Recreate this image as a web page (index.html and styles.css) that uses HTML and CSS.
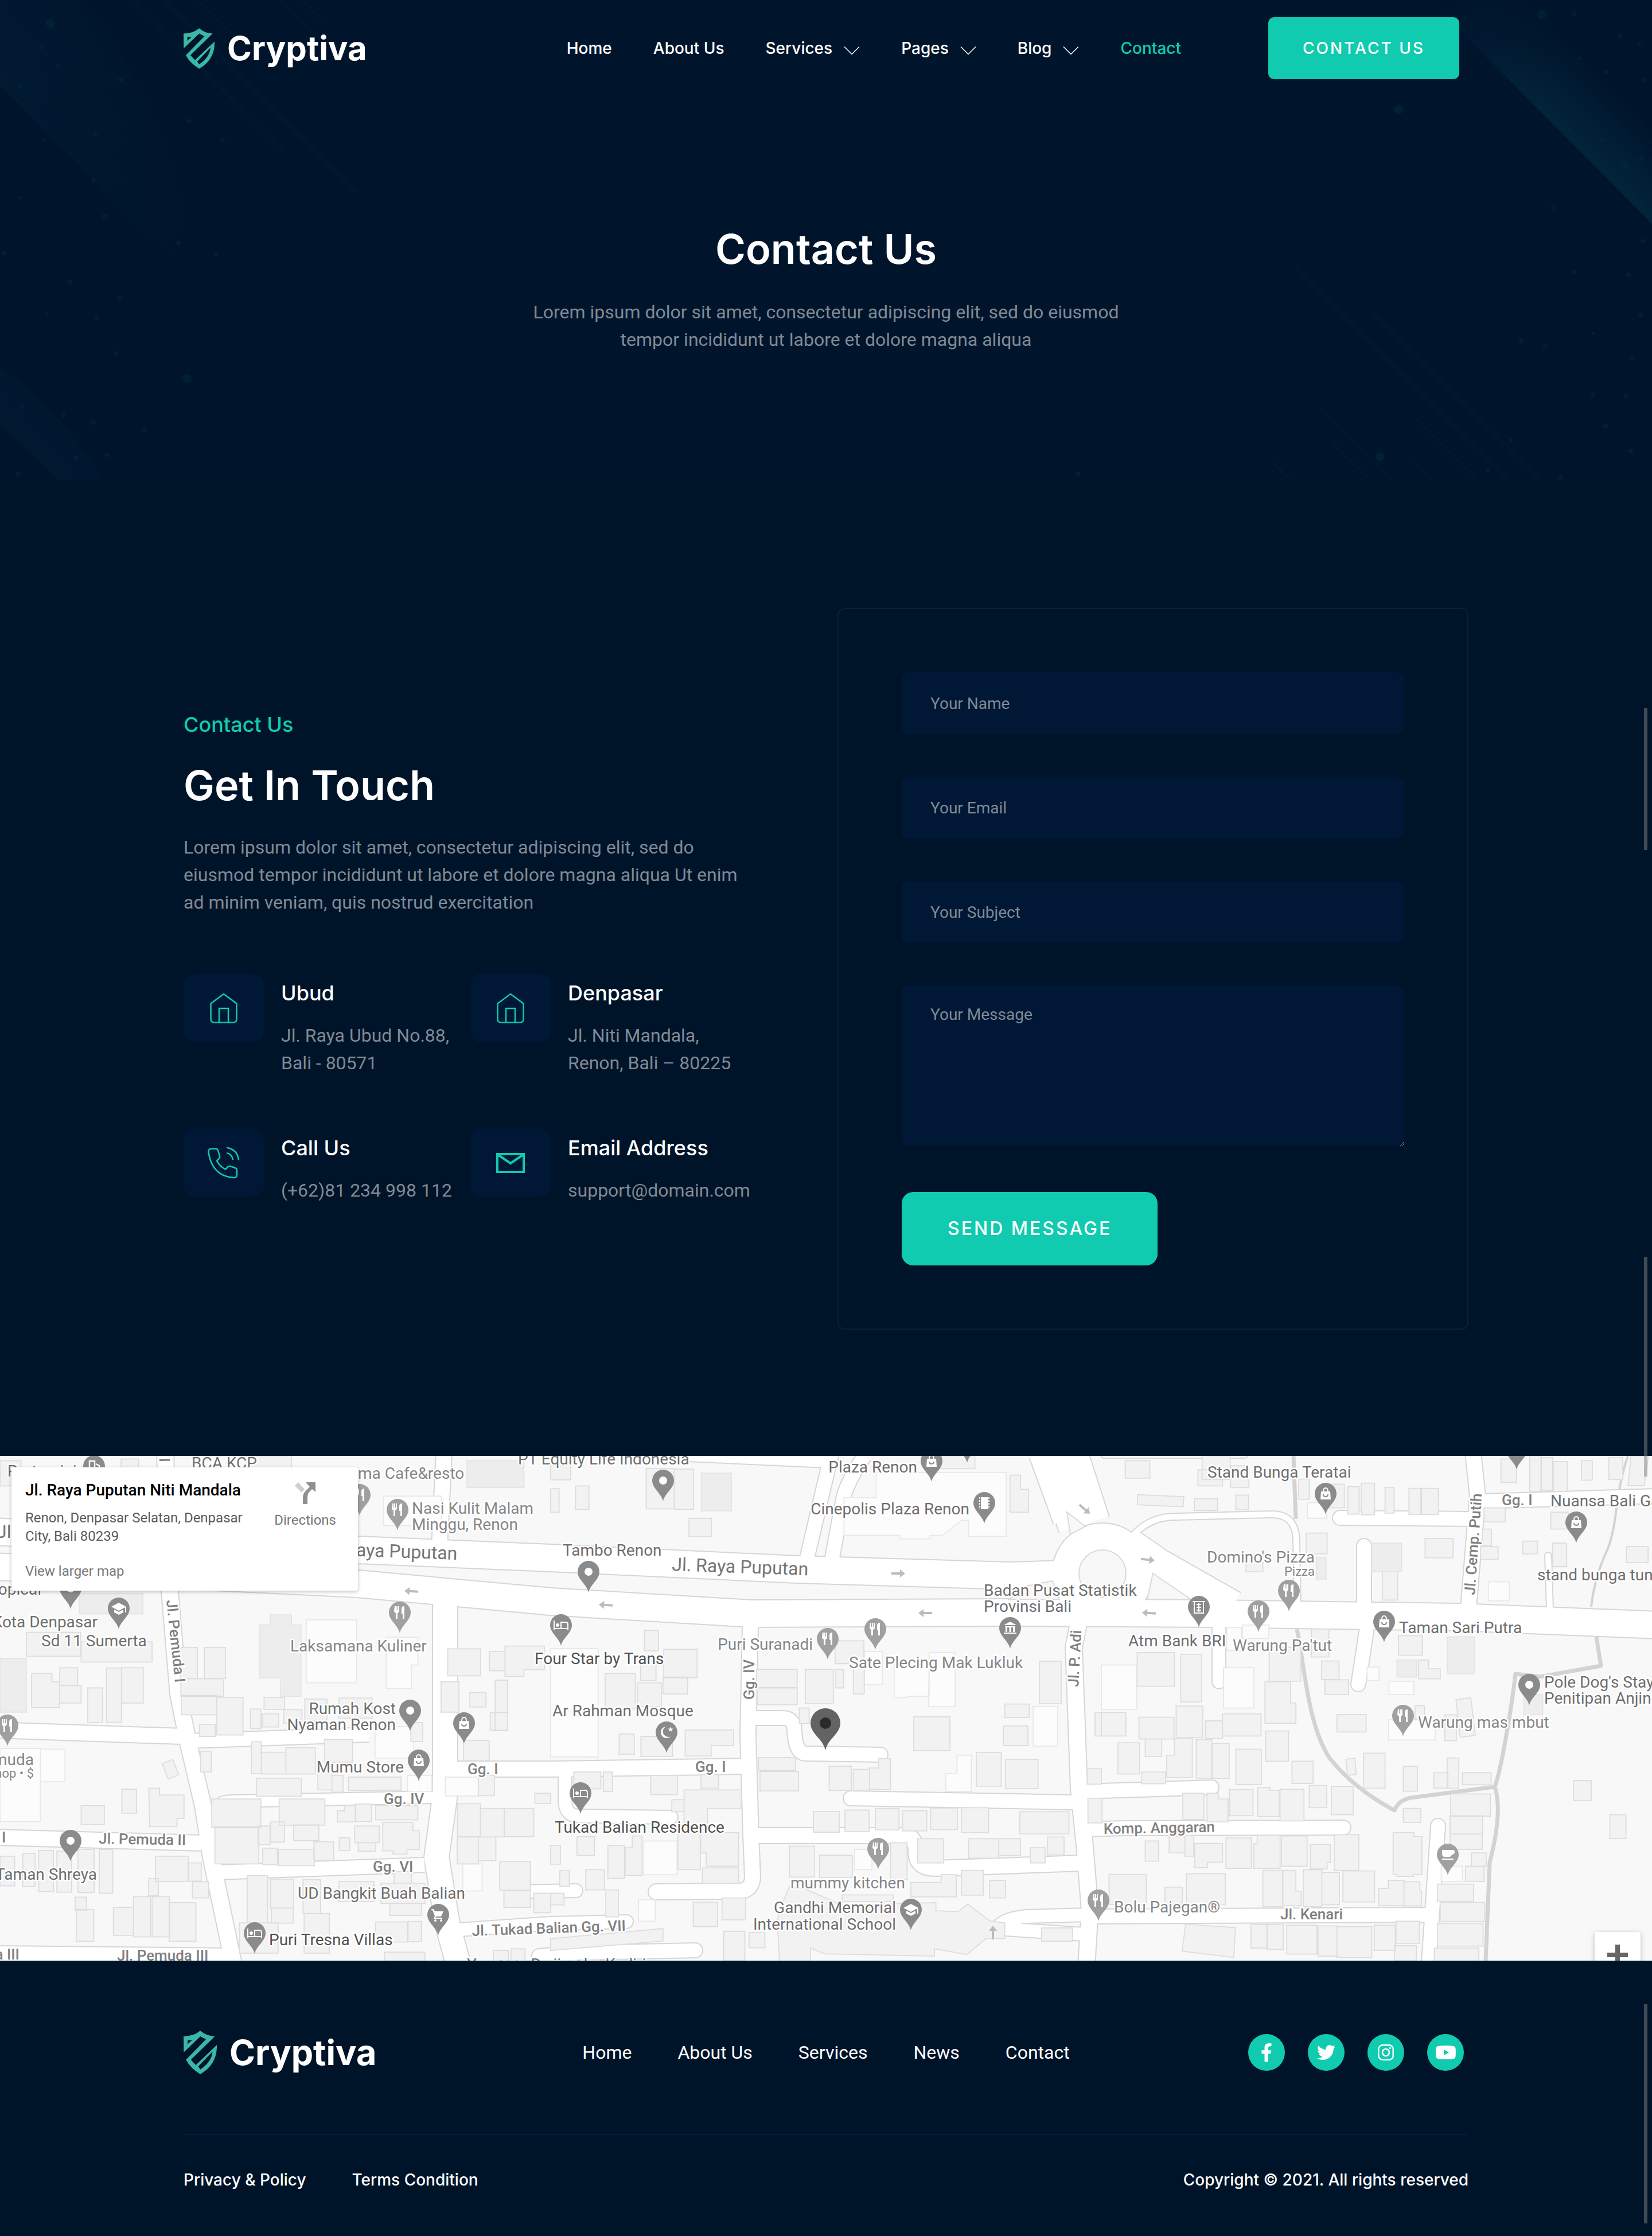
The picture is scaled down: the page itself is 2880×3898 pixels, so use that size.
FILE: index.html
```html
<!DOCTYPE html>
<html lang="en">
<head>
<meta charset="utf-8">
<meta name="viewport" content="width=device-width, initial-scale=1">
<title>Contact Us | Cryptiva</title>
<link rel="stylesheet" href="styles.css">
</head>
<body>
<svg class="sprite" aria-hidden="true">
  <symbol id="shield" viewBox="30 80 163 213">
    <path fill-rule="evenodd" d="M30 108Q85 106 112 80Q140 106 183 108L66 222L90 248L193 150Q196 245 112 293Q62 262 42 222L140 122L112 108L31 186zM50 126h22L50 146zM172 182L102 255L112 270Q168 232 172 182z"/>
  </symbol>
  <symbol id="chevron" viewBox="0 0 28 16"><path d="M1 1.500L14 14.500L27 1.500" fill="none" stroke="currentColor" stroke-width="1.500"/></symbol>
  <symbol id="home" viewBox="0 0 48 53">
    <path d="M1.500 18.500L24 1.800L46.500 18.500V46a5.500 5.500 0 0 1-5.500 5.500H7a5.500 5.500 0 0 1-5.500-5.500zM16 51V27h16v24" fill="none" stroke="currentColor" stroke-width="2.500"/>
  </symbol>
</svg>

<header class="hero">
  <svg class="hero-art" viewBox="0 0 2880 836" preserveAspectRatio="xMidYMid slice" aria-hidden="true">
    <defs>
      <linearGradient id="beamL" x1="0" y1="1" x2="1" y2="0"><stop offset=".25" stop-color="#03243a"/><stop offset=".75" stop-color="#001730"/><stop offset="1" stop-color="#00152c"/></linearGradient>
      <linearGradient id="fadeL" gradientUnits="userSpaceOnUse" x1="60" y1="100" x2="330" y2="440"><stop offset="0" stop-color="#00152c" stop-opacity="0"/><stop offset="1" stop-color="#00152c"/></linearGradient>
      <linearGradient id="beamR" gradientUnits="userSpaceOnUse" x1="2690" y1="190" x2="2770" y2="110"><stop offset="0" stop-color="#022339"/><stop offset="1" stop-color="#00152c"/></linearGradient>
      <linearGradient id="fadeR" gradientUnits="userSpaceOnUse" x1="2540" y1="0" x2="2700" y2="160"><stop offset="0" stop-color="#00152c"/><stop offset="1" stop-color="#00152c" stop-opacity="0"/></linearGradient>
    </defs>
    <path d="M0 0H150Q320 230 330 480L0 150z" fill="url(#beamL)" opacity=".45"/>
    <path d="M0 0H150Q320 230 330 480L0 150z" fill="url(#fadeL)"/>
    <path d="M0 640Q110 720 180 836H100L0 738z" fill="url(#beamL)" opacity=".35"/>
    <path d="M2500 0H2880V390L2560 68z" fill="url(#beamR)"/>
    <path d="M2500 0H2880V390L2560 68z" fill="url(#fadeR)"/>
    <g class="hero-lines">
      <path d="M232 0L496 264M287 0L624 337M345 0L420 75M490 0L545 55M527 0L562 35"/>
      <path d="M2260 468L2628 836M2389 541L2684 836M2299 711L2424 836M2322 771L2387 836M2469 729L2576 836M2459 797L2498 836M2219 806L2249 836"/>
    </g>
    <g class="hero-dots">
      <circle cx="88" cy="41" r="8"/><circle cx="72" cy="82" r="4"/><circle cx="210" cy="139" r="4"/><circle cx="101" cy="113" r="3"/><circle cx="34" cy="151" r="4"/><circle cx="329" cy="211" r="4"/><circle cx="388" cy="244" r="4"/><circle cx="166" cy="234" r="4"/><circle cx="76" cy="243" r="3"/><circle cx="163" cy="314" r="4"/><circle cx="36" cy="344" r="3"/><circle cx="183" cy="377" r="5"/><circle cx="311" cy="423" r="4"/><circle cx="377" cy="444" r="4"/><circle cx="7" cy="441" r="4"/><circle cx="122" cy="491" r="4"/><circle cx="208" cy="520" r="4"/><circle cx="82" cy="546" r="3"/><circle cx="169" cy="555" r="4"/><circle cx="202" cy="616" r="4"/><circle cx="326" cy="660" r="8"/><circle cx="38" cy="709" r="4"/><circle cx="110" cy="723" r="4"/><circle cx="163" cy="737" r="4"/><circle cx="252" cy="749" r="4"/><circle cx="186" cy="793" r="4"/><circle cx="133" cy="798" r="4"/><circle cx="32" cy="826" r="4"/>
      <circle cx="2688" cy="25" r="8"/><circle cx="2744" cy="24" r="4"/><circle cx="2824" cy="63" r="4"/><circle cx="2858" cy="77" r="3"/><circle cx="2754" cy="102" r="3"/><circle cx="2801" cy="126" r="4"/><circle cx="2867" cy="139" r="4"/><circle cx="2438" cy="191" r="8"/><circle cx="2735" cy="225" r="4"/><circle cx="2793" cy="243" r="4"/><circle cx="2861" cy="276" r="4"/><circle cx="2834" cy="288" r="7"/><circle cx="2708" cy="361" r="4"/><circle cx="2864" cy="420" r="4"/><circle cx="2745" cy="474" r="4"/><circle cx="2839" cy="479" r="4"/><circle cx="2860" cy="549" r="4"/><circle cx="2777" cy="581" r="3"/><circle cx="2652" cy="594" r="4"/><circle cx="2694" cy="603" r="4"/><circle cx="2844" cy="625" r="4"/><circle cx="2777" cy="688" r="4"/><circle cx="2835" cy="690" r="4"/><circle cx="2799" cy="743" r="4"/><circle cx="2634" cy="768" r="4"/><circle cx="2406" cy="796" r="8"/><circle cx="2843" cy="786" r="4"/><circle cx="2594" cy="820" r="4"/><circle cx="1880" cy="826" r="4"/><circle cx="2720" cy="832" r="4"/>
    </g>
  </svg>
  <div class="topbar container">
    <a class="brand" href="#"><svg class="brand-mark"><use href="#shield"/></svg><span>Cryptiva</span></a>
    <nav class="menu" aria-label="Main">
      <a href="#">Home</a>
      <a href="#">About Us</a>
      <a href="#">Services <svg class="chevron"><use href="#chevron"/></svg></a>
      <a href="#">Pages <svg class="chevron"><use href="#chevron"/></svg></a>
      <a href="#">Blog <svg class="chevron"><use href="#chevron"/></svg></a>
      <a class="active" href="#">Contact</a>
    </nav>
    <a class="btn btn-small" href="#contact">CONTACT US</a>
  </div>
  <div class="hero-text">
    <h1>Contact Us</h1>
    <p>Lorem ipsum dolor sit amet, consectetur adipiscing elit, sed do eiusmod tempor incididunt ut labore et dolore magna aliqua</p>
  </div>
</header>

<main>
  <section class="contact container" id="contact">
    <div class="intro">
      <p class="eyebrow">Contact Us</p>
      <h2>Get In Touch</h2>
      <p class="lead">Lorem ipsum dolor sit amet, consectetur adipiscing elit, sed do eiusmod tempor incididunt ut labore et dolore magna aliqua Ut enim ad minim veniam, quis nostrud exercitation</p>
      <div class="places">
        <div class="place">
          <div class="tile"><svg width="48" height="53"><use href="#home"/></svg></div>
          <div class="place-text"><h3>Ubud</h3><p>Jl. Raya Ubud No.88,<br>Bali - 80571</p></div>
        </div>
        <div class="place">
          <div class="tile"><svg width="48" height="53"><use href="#home"/></svg></div>
          <div class="place-text"><h3>Denpasar</h3><p>Jl. Niti Mandala,<br>Renon, Bali – 80225</p></div>
        </div>
        <div class="place">
          <div class="tile"><svg width="56" height="56" viewBox="0 0 56 56" fill="none" stroke="currentColor" stroke-width="2.500"><path d="M6 3.500h8q3 0 4 3l3 10q.5 2-1 4l-4 4q5 10 15 15l4-4q2-2 4-1.500l9 3q3 1 3 4v8q0 5.500-6 5Q8 51 1.500 10Q1 4 6 3.500zM33 1.500Q52 5 54 23M33 11Q43 13 44 23"/></svg></div>
          <div class="place-text"><h3>Call Us</h3><p>(+62)81 234 998 112</p></div>
        </div>
        <div class="place">
          <div class="tile"><svg width="50" height="35" viewBox="0 0 50 35" fill="none" stroke="currentColor" stroke-width="4"><path d="M2 2h46v31H2zM3 3L25 18L47 3"/></svg></div>
          <div class="place-text"><h3>Email Address</h3><p>support@domain.com</p></div>
        </div>
      </div>
    </div>
    <form class="card">
      <input type="text" aria-label="Your Name" placeholder="Your Name">
      <input type="email" aria-label="Your Email" placeholder="Your Email">
      <input type="text" aria-label="Your Subject" placeholder="Your Subject">
      <textarea aria-label="Your Message" placeholder="Your Message"></textarea>
      <button class="btn btn-large" type="button">SEND MESSAGE</button>
    </form>
  </section>

  <section class="map" aria-label="Map">
    <svg class="map-canvas" viewBox="0 0 2880 880" preserveAspectRatio="xMidYMid slice">
      <defs>
        <path id="pin" d="M0 0C-3-14-19-22-19-36A19 19 0 1 1 19-36C19-22 3-14 0 0z"/>
        <g id="p-dot"><use href="#pin"/><circle cy="-36" r="7" fill="#fff"/></g>
        <g id="p-food"><use href="#pin"/><path fill="#fff" d="M-9-47h2v7h1v-7h2v7h1v-7h2v8q0 3-3 4v10h-3v-10q-3-1-3-4zM3-42q0-5 5-5v22h-3v-9h-2z"/></g>
        <g id="p-bag"><use href="#pin"/><path fill="#fff" d="M-8-40h16l1 14h-18z"/><path fill="none" stroke="#fff" stroke-width="2" d="M-4-40q0-6 4-6t4 6"/><path fill="none" stroke="#8b8b8b" stroke-width="2" d="M-4-35q0 4 4 4t4-4"/></g>
        <g id="p-bed"><use href="#pin"/><path fill="none" stroke="#fff" stroke-width="2" d="M-12-44v17M-12-30h24M12-27v-10q0-4-4-4h-8v10"/><circle cx="-6" cy="-36" r="3" fill="#fff"/></g>
        <g id="p-school"><use href="#pin"/><path fill="#fff" d="M0-46L13-39L0-32L-13-39zM-8-34L0-30L8-34V-29L0-25L-8-29zM11-38h2v9h-2z"/></g>
        <g id="p-bank"><use href="#pin"/><path fill="#fff" d="M0-47L11-41H-11zM-9-39h18v2H-9zM-8-37h3v8h-3zM-1.500-37h3v8h-3zM5-37h3v8H5zM-11-28h22v2h-22z"/></g>
        <g id="p-film"><use href="#pin"/><path fill="#fff" d="M-6-46h12v21H-6z"/><path d="M-8-46v21M8-46v21" stroke="#fff" stroke-width="2" stroke-dasharray="3 2"/></g>
        <g id="p-moon"><use href="#pin"/><path fill="#fff" d="M-1-46a10 10 0 1 0 8 17a9 9 0 1 1-8-17zM7-46l1.500 3.500h3.500l-3 2l1 3.500l-3-2l-3 2l1-3.500l-3-2h3.500z"/></g>
        <g id="p-cart"><use href="#pin"/><path fill="#fff" d="M-12-46h4l2 4h15l-4 9h-9l-1 2h12v2h-15l2-5-4-10h-2z"/><circle cx="-5" cy="-26" r="2" fill="#fff"/><circle cx="5" cy="-26" r="2" fill="#fff"/></g>
        <g id="p-cup"><use href="#pin"/><path fill="#fff" d="M-10-44h19q3 0 3 4t-5 4q-1 4-5 4h-7q-5 0-5-6zM-10-29h20v2h-20z"/></g>
        <g id="p-atm"><use href="#pin"/><path fill="none" stroke="#fff" stroke-width="2" d="M-11-45h22M-8-44v19h16v-19M-4-40h8M-4-35h8M-4-30h8M0-42v15"/></g>
        <g id="p-gas"><use href="#pin"/><path fill="none" stroke="#fff" stroke-width="2.500" d="M-8-26v-19h9v19zM3-40l6 3v9"/></g>
        <path id="arrow" fill="#bcbcbc" d="M-12-2H3V-7L12 0L3 7V2H-12z"/>

        <g id="streets">
          <path class="w46" d="M-10 132L624 164L960 178L1390 198L1760 209L1880 205M-10 193L311 208L624 223L960 254L1310 275L1760 273L2116 275L2544 281L2890 295"/>
          <circle class="w46" cx="1922" cy="205" r="64"/>
          <path class="w52" d="M1820-5L1862 110M1965 150L2020 188L2150 262"/>
          <path class="w90" d="M1850-5L1890 120"/>
          <path class="w42" d="M776 255V590L761 700L780 816L800 890"/>
          <path class="w28" d="M288-5L296 236L311 416L328 500L354 610L368 700L408 890M1880 293L1872 334L1881 580L1891 680L1900 792L1894 890M1180-6L1440 6"/>
          <path class="w26" d="M774-5L766 160M-5 478L318 489M-5 665L352 675M-5 868L404 872M790 546L960 546L1300 541M2568-5L2576 70L2560 265"/>
          <path class="w24" d="M1406 182L1450-5M1450 182L1471 70Q1480 40 1507 0M330 497L643 486M380 726L740 713M2587 79L2890 70M1895 803L2488 800"/>
          <path class="w20" d="M385 606Q390 602 405 602L756 595"/>
          <g stroke-linecap="round">
            <path class="w26" d="M1308 298L1304 486L1309 662L1312 733Q1312 759 1285 759L1144 760M1322 662H1575Q1597 662 1597 690Q1597 719 1630 719L1885 710"/>
            <path class="w24" d="M1318 457H1364Q1385 457 1385 480Q1387 519 1405 519L1535 521M1483 597L1870 604M1893 651L1960 649L2342 648M1890 586L1920 584L2112 578M2507 645L2498 780L2490 895M2378 157V262M2383 300L2368 398M2336 108L2563 110M940 872L1010 866L1212 862"/>
            <path class="w22" d="M2125 298V394M985 545V600Q985 628 1010 628L1170 630M900 760L1004 758M800 826L960 815L1092 812M1895 800L1790 803Q1750 806 1737 824L1890 834"/>
            <path class="w10" d="M1977 137Q2005 106 2050 106L2214 102C2255 100 2260 130 2260 150L2262 258M2699 174L2702 267M1925-2H2170"/>
          </g>
        </g>
      </defs>

      <rect width="2880" height="880" fill="#f8f8f8"/>
      <g fill="none" stroke="#d3d3d3" stroke-linejoin="round">
        <path stroke-width="7" d="M2255 0L2259 110M2261 302C2275 370 2280 470 2318 527Q2360 580 2431 618Q2438 600 2460 596L2606 577M2783 316L2791 366L2685 385L2642 380Q2635 440 2624 498Q2615 550 2606 577Q2620 620 2597 709L2590 880"/>
        <path stroke-width="4" d="M2838 0Q2824 40 2817 99Q2812 140 2802 164Q2780 210 2774 263"/>
      </g>
      <g class="casing"><use href="#streets"/></g>
      <g class="roadway"><use href="#streets"/></g>
      <g fill="#f8f8f8" stroke="#dadada" stroke-width="2">
        <circle cx="1922" cy="205" r="41"/>
        <path d="M2010 205L2000 250H2076zM1860 98L1892 123L1866 137zM1759 250L1790 227L1835 218L1846 250z"/>
      </g>

      <g class="buildings" transform="translate(0 -18) scale(.6122 .5868)">
        <path class="pale" d="M872 518h143v187H872zM1100 570h90v82h-18v70H1100zM1092 150h165v88H1092zM1068 835h110v93H1068zM0 900h115v217H0zM1318 1243h55v80H1318zM1268 985h95v56H1268zM1160 980h70v48H1160zM115 902h70v97H115z"/>
        <path class="dark" d="M226 440h181v60H226zM740 533h30v-30h60v30h27v212h-58v-54h-59zM1330 45h162v80H1330zM0 632h75v160H0z"/>
        <path d="M75 555h155v71H75zM231 583h202v60H231zM90 677h58v25h22v76H90zM170 660h51v53H170zM170 713h61v52H170zM250 720h42v103H250zM303 661h43v161H303zM346 660h62v105H346zM514 600h48v92H514zM582 600h60v92H582zM515 693h122v52H515zM516 742h101v58H516zM617 748h75v112H617zM568 828h45v36H568zM752 748h58v36H752zM713 783h30v58H713zM747 797h47v39H747zM808 785h52v40H808zM868 753h63v65H868zM965 750h95v60H965zM1170 823h34v56H1170zM1275 604h94v80H1275zM1256 702h51v90H1256zM1338 734h46v43H1338zM1410 697h36v150H1410zM1396 793h50v53H1396zM1394 612h44v57H1394zM1438 596h112v70h-58v20H1438zM571 908h31v62H571zM716 880h28v95H716zM744 911h70v65H744zM814 898h84v78H814zM924 873h80v68H924zM730 988h128v54H730zM905 975h40v48H905zM945 980h32v50H945zM992 985h150v40H992zM1362 980h46v60H1362zM1320 876h73v60H1320zM462 945l30-12l17 45l-30 13zM347 1021h42v71H347zM424 1018h30v20h70v70h-20v24H426zM231 1070h66v56H231z"/>
        <path d="M603 1050h140v85H603zM612 1133h125v110H612zM795 1050h130v78H795zM735 1130h34v56H735zM770 1118h40v60H770zM836 1127h72v47H836zM748 1196h42v49H748zM793 1200h102v48H793zM894 1177h56v55H894zM961 1085h20v-15h32v48H961zM1012 1065h46v52H1012zM1070 1070h120v42H1070zM1010 1130h70v50H1010zM1020 1180h50v25H1020zM966 1165h30v38H966zM1090 1120h86v24h18v56h-35v14h-40v-10h-29zM0 1220h42v88H0zM65 1212h35v98H65zM110 1203h42v122H110zM162 1205h42v122H162zM222 1200h46v128H222zM283 1200h38v130H283zM443 1220h93v75H443zM423 1287h28v50H423zM536 1240h37v54H536zM548 1296h46v48H548zM323 1372h57v83H323zM380 1340h48v120H380zM433 1340h50v120H433zM482 1358h76v115H482zM214 1342h32v38H214zM217 1378h50v95H217zM704 1278h58v140H704zM770 1288h66v86H770zM773 1374h62v45H773zM863 1290h50v100H863zM866 1390h72v118H866zM965 1295h100v60H965zM1085 1300h125v60H1085zM1110 1360h90v36H1110zM1122 1265h50v35H1122zM1070 1415h90v60H1070zM1162 1414h38v60H1162zM1095 1505h115v30H1095zM682 1418h110v90H682zM1303 1064h65v98H1303zM1302 1163h60v80H1302zM1368 1078h68v85H1368zM1436 1078h84v84H1436zM1362 1163h50v70H1362zM1423 1236h87v85H1423zM1435 1322h75v50H1435zM1520 1330h48v58H1520zM1523 1033h45v30H1523zM1405 1500h43v30H1405zM1455 1495h40v35H1455zM0 45h60v75H0zM345 40h50v30H345zM700 31h130v40H700z"/>
      </g>
      <g class="buildings" transform="translate(960 -18) scale(.6122 .5868)">
        <path class="pale" d="M835 155h92V80h370v190H1190v-48h-20l-55 45h-35v10H995v-10H835zM0 603h135v322H0zM893 612h52v98H893zM978 640h100v105h-65v4H978zM1078 615h74v160h-76zM1374 775h70v118H1374zM1125 975h32v-55h41v108H1125zM865 1200h50v60H865zM265 1175h95v100H265zM250 1350h48v63H250z"/>
        <path d="M272 68h80v120H272zM352 70h55v120H352zM394 216h64v54H394zM71 120h38v70H71zM0 128h24v70H0zM0 60h57v42H0zM1308 88h30v42h23v68H1308zM1108 31h100v38H1108zM267 550h40v60H267zM256 640h44v58H256zM155 677h86v105H155zM322 605h95v85H322zM247 705h68v70H247zM320 688h70v50H320zM195 857h43v60H195zM257 864h90v60H257zM383 845h138v46h-64v31H383zM586 665h116v54H586zM588 720h114v50H588zM725 665h80v102H725zM810 580h82v68H810zM812 665h22v55H812zM862 648h31v90H862zM708 780h28v46H708zM1034 806h103v100H1034zM1293 768h70v40H1293zM1289 833h70v58H1289zM1392 641h62v126H1392zM592 927h105v38H592zM596 968h110v58H596zM793 953h63v72H793zM862 962h46v63H862zM908 958h26v-28h34v92H908zM1212 912h71v100H1212zM1295 933h93v86H1295zM285 980h76v57H285zM428 978h50v40H428zM66 970h77v50H66zM150 970h26v58H150zM380 1023h163v55h-96v62H380zM345 1052h35v36H345zM748 1087h74v62H748zM838 1083h69v64H838zM925 1078h67v64H925zM1002 1085h69v60H1002zM1082 1077h76v64H1082zM1170 1076h77v74H1170zM1336 1088h140v66H1336z"/>
        <path d="M1045 1168h74v72H1045zM1190 1168h86v58H1190zM1276 1168h62v50H1276zM1366 1195h42v45H1366zM1415 1163h47v53H1415zM680 1190h71v92H680zM766 1217h93v66H766zM968 1180h47v110H968zM1026 1298h86v-23h43v66H1026zM1170 1262h62v74H1170zM1250 1292h45v52H1250zM830 1335h145v20H830zM163 1188h47v98H163zM212 1195h20v-35h28v117H212zM362 1150h64v110H362zM427 1150h108v100h-92v-40h-16zM432 1255h103v46H432zM75 1162h50v56H75zM0 1188h28v56H0zM26 1263h27v46H26zM100 1260h53v60H100zM157 1320h36v80H157zM0 1330h38v35H0zM406 1357h69v72H406zM488 1344h67v65H488zM493 1443h60v88H493zM565 1447h45v45H565zM0 1465L320 1435v37L0 1500zM1398 1433h88v40H1398zM1530 1048h40v73H1530zM1550 793h20v70H1550zM1528 960h40v46H1528z"/>
        <path d="M660 1360L680 1310L730 1320L830 1365L1097 1358V1382L1160 1385L1188 1362L1250 1412L1293 1418V1465H1240L1185 1512L1093 1495V1517L780 1510L740 1493V1540H652L645 1410z"/>
        <path class="dark" d="M429 82h86v112H429z"/>
      </g>
      <g class="buildings" transform="translate(1920 -18) scale(.6122 .5868)">
        <path class="pale" d="M1102 405h60v56H1102zM0 652h101v132H0zM348 660h86v120H348zM819 700h71v40H819zM757 658h34v40H757zM818 815h133v60H818zM968 1250h60v45H968zM587 170h55v46H587zM402 533h75v40H402zM357 540h42v70H357z"/>
        <path d="M68 45h70v52H68zM287 31h80v70H287zM275 72h70v48H275zM368 60h52v65H368zM103 146l132 6l-2 30l-130-6zM265 158h66v35H265zM383 147h36v44H383zM562 100h30v60H562zM640 115h52v70H640zM702 122h32v82H702zM740 112h38v94H740zM808 125h26v76H808zM876 127h34v78H876zM912 127h48v78H912zM583 260h60v62H583zM412 340h48v35H412zM800 375h44v84H800zM922 276h80v58H922zM1090 185h60v42H1090zM1085 248h26v50H1085zM1080 300h50v38H1080zM1138 40h44v70H1138zM1220 31h32v105H1220zM1253 35h32v98H1253zM1287 48h40v88H1287zM1367 45h31v58H1367zM1445 36h40v65H1445zM1280 198h50v50H1280zM1285 290h40v70H1285zM1200 284h42v38H1200zM1495 300h62v48H1495zM1508 31h50l-12 88h-46z"/>
        <path d="M102 615h106v100H102zM226 620h60v142H226zM213 774h76v94H213zM107 807h100v65H107zM0 793h70v70H0zM345 797h110v66H345zM297 818h48v52H297zM478 600h90v100H478zM466 702h73v63h15v60H466zM468 848h65v90H468zM598 545h50v83H598zM627 640h50v55H627zM637 696h67v44H637zM47 883h62v93H47zM125 872h47v52H125zM208 870h51v116H186v-66h22zM270 874h45v114H270zM316 885h48v104H316zM383 902h73v105H383zM543 938h60v66H543zM115 970h68v35H115zM232 1033h60v78H232zM301 1033h32v17h28v68H301zM365 1022h67v78H365zM445 1016h35v8h27v78H445zM509 1021h68v94H509zM592 1010h50v66H592zM655 1013h62v84H655zM671 799h83v52H671zM846 565h68v58H846zM903 637h29v26h33v30H903zM893 773h27v40H893zM978 800h33v77H978zM1010 755l42-6l13 112l-43 6zM747 914h61v104H747zM696 932l26-3l4 48l-25 3zM860 953h40v74H860zM947 972h40v46H947zM985 928h33v90H985zM1028 972h82v36H1028zM860 1078h50v42H860zM995 1035h113v66H995zM993 1100h93v54H993zM993 1154h92v46H993zM1054 1210h42v40H1054zM1037 1250h53v45H1037zM957 1303h103v52H957zM965 1357h127v57H965zM957 1420h130v67H957zM948 1493h127v40H948z"/>
        <path d="M125 1175h38v60H125zM193 1162h45v48H193zM238 1158h25v62H238zM266 1182h79v56h-43v16H266zM355 1166h72v90H355zM434 1182h10v-24h65v98H434zM513 1160h73v90H513zM595 1185h57v54h-9v19H595zM663 1156h70v106H663zM831 1150h59v12h23v112h-24v6h-47v-6H831zM22 1274h106v90H22zM181 1312h50v50H181zM242 1272h111v92H242zM460 1262h56v108H460zM517 1262h37v62h15v43H517zM575 1260h53v110H575zM628 1268h50v96H628zM688 1264h90v92H688zM790 1316h27v-24h45v75H790zM862 1296h45v28h5v44H862zM240 1422l142 10l-5 89l-147-19zM426 1423h47v70H426zM472 1423h46v74H472zM528 1425h86v86H528zM617 1427h54v90H617zM671 1429h99v92H671zM777 1425h60v75H777zM839 1413h66v66H839zM835 1486h62v45H835zM1345 995h50v60H1345zM1448 1097h46v70H1448z"/>
        <path class="dark" d="M770 290h85v85H770zM985 568h78v110H985zM842 637h56v51H842zM612 332h28v65H612zM1203 740h54v60H1203z"/>
      </g>

      <g>
        <use href="#arrow" transform="translate(717 236) rotate(184)"/><use href="#arrow" transform="translate(1056 260) rotate(184)"/><use href="#arrow" transform="translate(1613 274) rotate(180)"/><use href="#arrow" transform="translate(2003 274) rotate(184)"/>
        <use href="#arrow" transform="translate(1566 205)"/><use href="#arrow" transform="translate(2001 181) rotate(6)"/><use href="#arrow" transform="translate(1891 93) rotate(40)"/><use href="#arrow" transform="translate(1731 831) rotate(-90)"/>
      </g>

      <g class="pins">
        <use href="#p-gas" x="164" y="54"/><use href="#p-dot" x="123" y="267"/><use href="#p-school" x="207" y="302"/><use href="#p-dot" x="715" y="480"/><use href="#p-bag" x="809" y="502"/><use href="#p-bag" x="730" y="567"/><use href="#p-dot" x="123" y="707"/><use href="#p-bed" x="444" y="868"/><use href="#p-cart" x="764" y="836"/>
        <use href="#p-dot" x="1156" y="79"/><use href="#p-dot" x="1026" y="238"/><use href="#p-bed" x="978" y="331"/><use href="#p-bank" x="1761" y="336"/><use href="#p-bag" x="1624" y="45"/><use href="#p-film" x="1716" y="118"/><use href="#p-dot" x="1686" y="12"/><use href="#p-moon" x="1162" y="518"/><use href="#p-bed" x="1012" y="624"/><use href="#p-school" x="1588" y="827"/>
        <use href="#p-bag" x="2311" y="102"/><use href="#p-atm" x="2090" y="299"/><use href="#p-bag" x="2413" y="325"/><use href="#p-bag" x="2748" y="152"/><use href="#p-dot" x="2644" y="24"/><use href="#p-dot" x="2666" y="435"/>
      </g>
      <g class="pins pins-food">
        <use href="#p-food" x="627" y="104"/><use href="#p-food" x="693" y="130"/><use href="#p-food" x="697" y="309"/><use href="#p-food" x="13" y="506"/><use href="#p-food" x="1443" y="355"/><use href="#p-food" x="1526" y="338"/><use href="#p-food" x="1531" y="721"/><use href="#p-food" x="1915" y="811"/><use href="#p-food" x="2247" y="271"/><use href="#p-food" x="2194" y="307"/><use href="#p-food" x="2446" y="489"/><use href="#p-cup" x="2524" y="731"/>
      </g>
      <path fill="#636363" d="M1439 514C1436 494 1413 485 1413 466A26 26 0 1 1 1465 466C1465 485 1442 494 1439 514z"/>
      <circle cx="1439" cy="466" r="10" fill="#2b2b2b"/>

      <g class="labels">
        <text x="13" y="36">Pertamini</text><text x="334" y="22">BCA KCP</text>
        <text class="end" x="72" y="242">Tropical</text><text class="end" x="170" y="299">Kota Denpasar</text><text x="72" y="332">Sd 11 Sumerta</text>
        <text class="end" x="690" y="450">Rumah Kost</text><text class="end" x="690" y="478">Nyaman Renon</text><text class="end" x="704" y="552">Mumu Store</text>
        <text class="end" x="169" y="739">Taman Shreya</text><text x="519" y="772">UD Bangkit Buah Balian</text>
        <text x="903" y="15">PT Equity Life Indonesia</text><text x="981" y="174">Tambo Renon</text><text class="end" x="1599" y="29">Plaza Renon</text><text class="end" x="1690" y="102">Cinepolis Plaza Renon</text>
        <text x="1715" y="244">Badan Pusat Statistik</text><text x="1715" y="272">Provinsi Bali</text><text x="963" y="454">Ar Rahman Mosque</text>
        <text class="end" x="1562" y="797">Gandhi Memorial</text><text class="end" x="1562" y="826">International School</text>
        <text x="2105" y="38">Stand Bunga Teratai</text><text x="1967" y="332">Atm Bank BRI</text><text x="2439" y="309">Taman Sari Putra</text><text x="2703" y="88">Nuansa Bali Garden</text><text x="2680" y="217">stand bunga tunjung</text>
        <text x="2692" y="404">Pole Dog's Stay &amp;</text><text x="2692" y="432">Penitipan Anjing</text><text x="814" y="896">Yayasan Dwijendra Kediri</text>
      </g>
      <g class="labels labels-food">
        <text x="624" y="40">ma Cafe&amp;resto</text><text x="718" y="101">Nasi Kulit Malam</text><text x="718" y="129">Minggu, Renon</text><text x="506" y="341">Laksamana Kuliner</text>
        <text class="end" x="59" y="539">Warung Pemuda</text><text class="end small" x="59" y="561">Shop • $</text>
        <text class="end" x="1417" y="338">Puri Suranadi</text><text x="1480" y="370">Sate Plecing Mak Lukluk</text><text x="1378" y="754">mummy kitchen</text>
        <text class="end" x="2292" y="186">Domino's Pizza</text><text class="end small" x="2292" y="209">Pizza</text><text x="2149" y="340">Warung Pa'tut</text><text x="2472" y="474">Warung mas mbut</text><text x="1942" y="796">Bolu Pajegan®</text>
      </g>
      <g class="labels labels-hotel">
        <text x="469" y="853">Puri Tresna Villas</text><text x="932" y="363">Four Star by Trans</text><text x="967" y="657">Tukad Balian Residence</text>
      </g>
      <g class="labels labels-main">
        <text class="end" transform="translate(797 181) rotate(2)">Jl. Raya Puputan</text><text transform="translate(1171 200) rotate(2)">Jl. Raya Puputan</text><text x="-6" y="143">Jl.</text>
      </g>
      <g class="labels labels-road">
        <text transform="translate(290 252) rotate(84)">Jl. Pemuda I</text><text class="end" transform="translate(278 11) rotate(88)">Jl. Pemuda I</text>
        <text x="815" y="555">Gg. I</text><text x="669" y="607">Gg. IV</text><text x="650" y="725">Gg. VI</text><text x="3" y="674">I</text><text transform="translate(172 676) rotate(1)">Jl. Pemuda II</text>
        <text x="204" y="880">Jl. Pemuda III</text><text class="end" x="34" y="878">Jl. Pemuda III</text><text transform="translate(823 837) rotate(-2)">Jl. Tukad Balian Gg. VII</text>
        <text transform="translate(1315 425) rotate(-90)">Gg. IV</text><text transform="translate(1880 403) rotate(-87)">Jl. P. Adi</text><text x="1212" y="551">Gg. I</text>
        <text transform="translate(2571 243) rotate(-86)">Jl. Cemp. Putih</text><text x="2618" y="86">Gg. I</text><text transform="translate(1924 659) rotate(-1)">Komp. Anggaran</text><text x="2232" y="808">Jl. Kenari</text>
      </g>
    </svg>
    <div class="map-card">
      <div class="map-address">
        <h2>Jl. Raya Puputan Niti Mandala</h2>
        <p>Renon, Denpasar Selatan, Denpasar City, Bali 80239</p>
        <a href="#">View larger map</a>
      </div>
      <a class="directions" href="#">
        <svg width="36" height="38" viewBox="0 0 36 38"><path d="M6 0L17 12L12 18L0 6z" fill="#cfcfcf"/><path d="M14 38V27Q14 19 20 14L26 8L19 0H36V17L30 12L25 17Q22 20 22 27V38z" fill="#8f8f8f"/></svg>
        Directions
      </a>
    </div>
    <button class="zoom-in" type="button" aria-label="Zoom in"></button>
  </section>
</main>

<footer class="footer container">
  <div class="footer-main">
    <a class="brand brand-large" href="#"><svg class="brand-mark"><use href="#shield"/></svg><span>Cryptiva</span></a>
    <nav class="footer-menu" aria-label="Footer"><a href="#">Home</a><a href="#">About Us</a><a href="#">Services</a><a href="#">News</a><a href="#">Contact</a></nav>
    <div class="social">
      <a href="#" aria-label="Facebook"><svg width="20" height="32" viewBox="0 0 320 512"><path fill="#fff" d="M279.140 288l14.220-92.660h-88.910v-60.130c0-25.350 12.420-50.060 52.240-50.060h40.420V6.260S260.430 0 225.360 0c-73.220 0-121.080 44.380-121.080 124.720v70.620H22.890V288h81.390v224h100.170V288z"/></svg></a>
      <a href="#" aria-label="Twitter"><svg width="32" height="32" viewBox="0 0 512 512"><path fill="#fff" d="M459.370 151.716c.325 4.548.325 9.097.325 13.645 0 138.720-105.583 298.558-298.558 298.558-59.452 0-114.680-17.219-161.137-47.106 8.447.974 16.568 1.299 25.340 1.299 49.055 0 94.213-16.568 130.274-44.832-46.132-.975-84.792-31.188-98.112-72.772 6.498.974 12.995 1.624 19.818 1.624 9.421 0 18.843-1.300 27.614-3.573-48.081-9.747-84.143-51.980-84.143-102.985v-1.299c13.969 7.797 30.214 12.670 47.431 13.319-28.264-18.843-46.781-51.005-46.781-87.391 0-19.492 5.197-37.360 14.294-52.954 51.655 63.675 129.300 105.258 216.365 109.807-1.624-7.797-2.599-15.918-2.599-24.040 0-57.828 46.782-104.934 104.934-104.934 30.213 0 57.502 12.670 76.670 33.137 23.715-4.548 46.456-13.320 66.599-25.340-7.798 24.366-24.366 44.833-46.132 57.827 21.117-2.273 41.584-8.122 60.426-16.243-14.292 20.791-32.161 39.308-52.628 54.253z"/></svg></a>
      <a href="#" aria-label="Instagram"><svg width="28" height="28" viewBox="0 0 28 28" fill="none" stroke="#fff" stroke-width="2.500"><rect x="1.250" y="1.250" width="25.500" height="25.500" rx="7"/><circle cx="14" cy="14" r="6"/><circle cx="21.500" cy="6.500" r="1.700" fill="#fff" stroke="none"/></svg></a>
      <a href="#" aria-label="YouTube"><svg width="35" height="24" viewBox="0 0 35 24"><path fill="#fff" fill-rule="evenodd" d="M5 .7Q17.500-.6 30 .7Q34 1 34.500 5Q35.300 12 34.500 19Q34 23 30 23.300Q17.500 24.600 5 23.300Q1 23 .5 19Q-.3 12 .5 5Q1 1 5 .7zM14 7v10l9-5z"/></svg></a>
    </div>
  </div>
  <div class="footer-legal">
    <div class="legal-links"><a href="#">Privacy &amp; Policy</a><a href="#">Terms Condition</a></div>
    <p>Copyright © 2021. All rights reserved</p>
  </div>
</footer>

<div class="scroll-marks" aria-hidden="true"><i class="mark mark-a"></i><i class="mark mark-b"></i><i class="mark mark-c"></i></div>
</body>
</html>
```
FILE: styles.css
```css
:root {
  --navy: #001429;
  --panel: #001835;
  --green: #10cbb0;
  --muted: #808a95;
  --body: Roboto, "Liberation Sans", sans-serif;
  --display: Inter, "Liberation Sans", sans-serif;
}

*, *::before, *::after { box-sizing: border-box; }

body {
  position: relative;
  margin: 0;
  background: var(--navy);
  color: #fff;
  font-family: var(--body);
  font-size: 32px;
  line-height: 48px;
}

h1, h2, h3, p { margin: 0; }
a { color: inherit; text-decoration: none; }
svg { display: block; flex: none; }

.sprite { position: absolute; width: 0; height: 0; }

.container {
  max-width: 2240px;
  margin-inline: auto;
}

/* Header and hero */
.hero {
  position: relative;
  padding-bottom: 220px;
  background: #00152c;
}

.hero-art {
  position: absolute;
  inset: 0;
  width: 100%;
  height: 100%;
}

.hero-lines { fill: none; stroke: #021b38; stroke-width: 2; }
.hero-dots { fill: #032a3c; opacity: .5; }

.topbar {
  position: relative;
  display: flex;
  align-items: center;
  padding: 30px 16px 30px 0;
}

.brand {
  display: flex;
  align-items: center;
  gap: 22px;
  font: 700 58px/72px var(--display);
}

.brand-mark { width: 54px; height: 71px; fill: #3bb8a5; }
.brand-large { font-size: 61px; line-height: 76px; }
.brand-large .brand-mark { width: 58px; height: 76px; }

.menu {
  display: flex;
  gap: 72px;
  margin-left: auto;
  margin-right: 152px;
  font: 500 28px/36px var(--display);
}

.menu a { display: flex; align-items: center; gap: 20px; }
.menu .active { color: var(--green); }
.chevron { width: 28px; height: 16px; margin-top: 8px; }

.btn {
  border: 0;
  background: var(--green);
  color: #fff;
  font-family: var(--display);
  font-weight: 500;
  letter-spacing: 3px;
  cursor: pointer;
}

.btn-small { padding: 36px 60px; border-radius: 10px; font-size: 28px; line-height: 36px; }
.btn-large { align-self: flex-start; margin-top: 6px; padding: 44px 80px; border-radius: 20px; font-size: 32px; line-height: 40px; }

.hero-text {
  position: relative;
  max-width: 1060px;
  margin: 222px auto 0;
  text-align: center;
}

h1, .intro h2 { font: 600 72px/88px var(--display); }
.hero-text p { margin-top: 42px; color: var(--muted); }

/* Contact details and form */
.contact {
  display: grid;
  grid-template-columns: 57fr 55fr;
  padding: 224px 0 220px;
}

.intro { padding-top: 181px; }
.eyebrow, h3 { font: 500 36px/44px var(--display); }
.eyebrow { color: var(--green); }
.intro h2 { margin-top: 40px; }
.lead { max-width: 980px; margin-top: 40px; color: var(--muted); }

.places {
  display: grid;
  grid-template-columns: 500px 1fr;
  row-gap: 90px;
  margin-top: 100px;
}

.place { display: flex; align-items: flex-start; gap: 30px; }

.tile {
  display: grid;
  place-items: center;
  width: 140px;
  height: 120px;
  border-radius: 20px;
  background: var(--panel);
  color: var(--green);
}

.place-text { padding-top: 12px; }
.place-text p { margin-top: 28px; color: var(--muted); white-space: nowrap; }

.card {
  display: flex;
  flex-direction: column;
  gap: 74px;
  padding: 110px;
  border: 2px solid #0c2036;
  border-radius: 12px;
}

.card input, .card textarea {
  width: 100%;
  border: 0;
  border-radius: 12px;
  background: var(--panel);
  color: #fff;
  font: 400 28px/34px var(--body);
}

.card input { height: 108px; padding: 0 50px; }
.card textarea { height: 280px; padding: 34px 50px; resize: vertical; }
.card ::placeholder { color: var(--muted); opacity: 1; }

/* Map */
.map {
  position: relative;
  height: 880px;
  overflow: hidden;
  background: #f8f8f8;
}

.map-canvas { width: 100%; height: 100%; }

/* Streets are drawn twice: a wider grey casing, then the white roadway */
.casing, .roadway { fill: none; stroke-linejoin: round; }
.casing { --edge: 4px; stroke: #d6d6d6; }
.roadway { --edge: 0px; stroke: #fff; }
.w10 { stroke-width: calc(10px + var(--edge)); }
.w20 { stroke-width: calc(20px + var(--edge)); }
.w22 { stroke-width: calc(22px + var(--edge)); }
.w24 { stroke-width: calc(24px + var(--edge)); }
.w26 { stroke-width: calc(26px + var(--edge)); }
.w28 { stroke-width: calc(28px + var(--edge)); }
.w42 { stroke-width: calc(42px + var(--edge)); }
.w46 { stroke-width: calc(46px + var(--edge)); }
.w52 { stroke-width: calc(52px + var(--edge)); }
.w90 { stroke-width: calc(90px + var(--edge)); }

.buildings { fill: #f2f2f2; stroke: #dddddd; stroke-width: 3; }
.buildings .pale { fill: #fcfcfc; stroke: #e8e8e8; }
.buildings .dark { fill: #ededed; stroke: #e4e4e4; }
.pins { fill: #8b8b8b; }
.pins-food { fill: #a0a0a0; }

.labels {
  fill: #6e6e6e;
  stroke: #fff;
  stroke-width: 5;
  stroke-linejoin: round;
  paint-order: stroke;
  font: 400 28px var(--body);
}

.labels-food { fill: #868686; }
.labels-hotel { fill: #505050; }
.labels-main { fill: #757575; font-size: 32px; }
.labels-road { fill: #808080; font-size: 26px; font-weight: 500; }
.labels .end { text-anchor: end; }
.labels .small { font-size: 22px; }

.map-card {
  position: absolute;
  top: 20px;
  left: 20px;
  display: flex;
  width: 604px;
  padding: 22px 38px 18px 24px;
  border-radius: 4px;
  background: #fff;
  box-shadow: 0 2px 6px rgba(0, 0, 0, .25);
  color: #5b5b5b;
  font-size: 24px;
  line-height: 32px;
}

.map-address { width: 404px; }
.map-address h2 { margin-bottom: 14px; color: #000; font: 500 28px/36px var(--body); white-space: nowrap; }
.map-address a { display: block; margin-top: 29px; color: #777; }

.directions {
  display: flex;
  flex-direction: column;
  align-items: center;
  gap: 12px;
  margin-left: auto;
  padding-top: 4px;
  color: #777;
}

.zoom-in {
  position: absolute;
  top: 830px;
  right: 20px;
  width: 80px;
  height: 80px;
  border: 0;
  border-radius: 4px;
  background:
    linear-gradient(#666, #666) 50% 50% / 36px 8px no-repeat,
    linear-gradient(#666, #666) 50% 50% / 8px 36px no-repeat,
    #fff;
  box-shadow: 0 2px 8px rgba(0, 0, 0, .25);
}

/* Footer */
.footer { padding: 122px 0 80px; }

.footer-main {
  display: grid;
  grid-template-columns: 1fr auto 1fr;
  align-items: center;
  padding-bottom: 104px;
  border-bottom: 2px solid #041d3f;
}

.footer-menu { display: flex; gap: 80px; }
.social { display: flex; justify-content: flex-end; gap: 40px; padding-right: 8px; }

.social a {
  display: grid;
  place-items: center;
  width: 64px;
  height: 64px;
  border-radius: 50%;
  background: var(--green);
}

.footer-legal {
  display: flex;
  justify-content: space-between;
  padding-top: 60px;
  font: 500 28px/36px var(--display);
}

.legal-links { display: flex; gap: 80px; }

/* Scroll position marks along the right edge */
.mark {
  position: absolute;
  right: 8px;
  width: 6px;
  background: rgba(128, 128, 128, .5);
}

.mark-a { top: 1234px; height: 248px; }
.mark-b { top: 2191px; height: 383px; }
.mark-c { top: 3494px; height: 382px; }
```
